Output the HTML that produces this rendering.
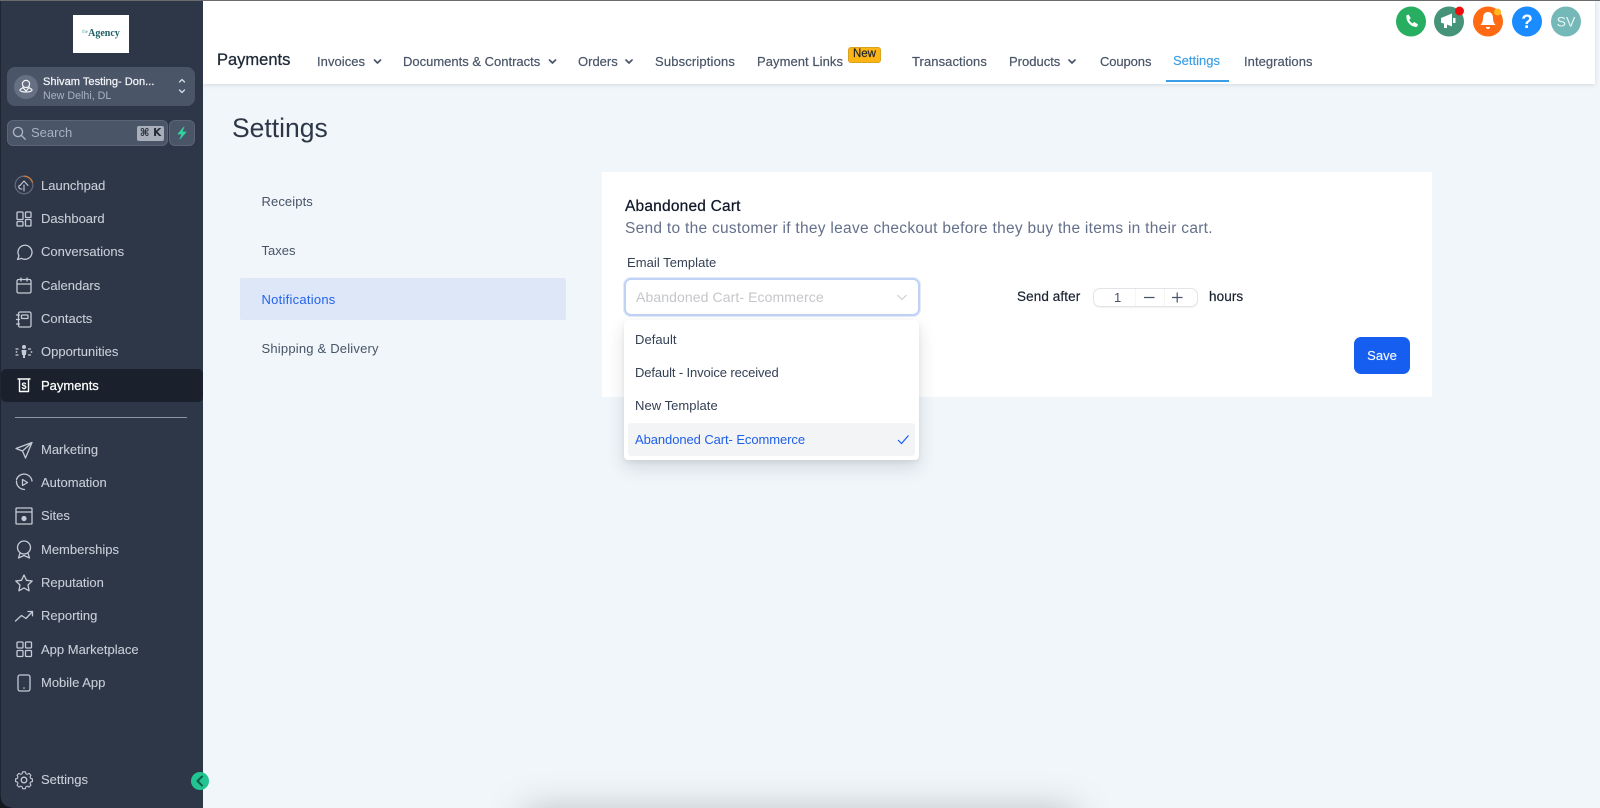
<!DOCTYPE html>
<html lang="en"><head><meta charset="utf-8"><title>Payments Settings</title>
<style>
*{box-sizing:border-box}
html,body{margin:0;padding:0;width:1600px;height:808px;overflow:hidden;background:#f1f6fa;font-family:"Liberation Sans",sans-serif}
#w{position:relative;width:1600px;height:808px;overflow:hidden;background:#f1f6fa}
.a{position:absolute}
.t{position:absolute;white-space:nowrap;line-height:20px;height:20px;font-size:13px}
.n{left:41px;color:#c9ced7;font-size:13px;-webkit-text-stroke:.1px #c9ced7}
.h{color:#4a5568;font-size:13px;-webkit-text-stroke:.2px #4a5568}
.m{left:261.500px;color:#475467;font-size:13px}
.o{left:635px;color:#344054;font-size:13px}
svg{position:absolute;left:0;top:0;overflow:visible}
</style></head><body><div id="w">
<div class="a" style="left:525px;top:812px;width:550px;height:30px;box-shadow:0 0 36px rgba(40,55,60,.34)"></div>
<div class="a" style="left:0;top:0;width:1600px;height:1px;background:#6b6b6b;z-index:9"></div>
<div class="a" style="left:203px;top:1px;width:1392px;height:83px;background:#fff;box-shadow:0 1px 4px rgba(50,70,90,.16)"></div>
<div class="a" style="left:0;top:0;width:202.500px;height:808px;background:#2d3748;border-left:1px solid #1f2633"></div>
<div class="a" style="left:0;top:796px;width:12px;height:12px;background:radial-gradient(circle at 100% 0,transparent 11px,#15181d 12px)"></div>

<div class="a" style="left:73px;top:15px;width:56px;height:38px;background:#fff"></div>
<div class="t" style="left:82px;top:23px;color:#1d5f66;font:bold 10px/20px 'Liberation Serif',serif"><span style="font-size:5px;font-weight:400;color:#65a5a5;vertical-align:3px">the</span>Agency</div>

<div class="a" style="left:7px;top:67px;width:188px;height:39px;background:#4a5568;border-radius:8px"></div>
<div class="a" style="left:14px;top:75px;width:24px;height:24px;background:#667082;border-radius:50%"></div>
<div class="t" style="left:43px;top:71.500px;color:#f2f4f7;font-size:11.100px;-webkit-text-stroke:.25px #f2f4f7">Shivam Testing- Don...</div>
<div class="t" style="left:43px;top:85.500px;color:#a9b2c0;font-size:10.700px">New Delhi, DL</div>
<div class="a" style="left:7px;top:120px;width:161px;height:26px;background:#4a5568;border:1px solid #5a6577;border-radius:6px"></div>
<div class="t" style="left:31px;top:123px;color:#a9b2c0;font-size:13px">Search</div>
<div class="a" style="left:137px;top:126px;width:27px;height:15px;background:#a8afbb;border-radius:2px;color:#222b38;font-size:10.500px;font-weight:700;line-height:15px;text-align:center;font-family:'DejaVu Sans',sans-serif">⌘ K</div>
<div class="a" style="left:169px;top:120px;width:26px;height:26px;background:#4a5568;border:1px solid #5a6577;border-radius:6px"></div>
<div class="a" style="left:1px;top:369px;width:201.500px;height:33px;background:#1a202c;border-radius:5px"></div>
<div class="a" style="left:15px;top:416.500px;width:172px;height:1px;background:#8d96a6"></div>

<div class="t n" style="top:175.500px">Launchpad</div>
<div class="t n" style="top:208.500px">Dashboard</div>
<div class="t n" style="top:242px">Conversations</div>
<div class="t n" style="top:275.500px">Calendars</div>
<div class="t n" style="top:308.500px">Contacts</div>
<div class="t n" style="top:342px">Opportunities</div>
<div class="t n" style="top:375.500px;color:#fff;-webkit-text-stroke:.25px #fff">Payments</div>
<div class="t n" style="top:439.500px">Marketing</div>
<div class="t n" style="top:472.500px">Automation</div>
<div class="t n" style="top:506px">Sites</div>
<div class="t n" style="top:539.500px">Memberships</div>
<div class="t n" style="top:572.500px">Reputation</div>
<div class="t n" style="top:606px">Reporting</div>
<div class="t n" style="top:639.500px">App Marketplace</div>
<div class="t n" style="top:672.500px">Mobile App</div>
<div class="t n" style="top:769.500px">Settings</div>

<svg width="1600" height="808" viewBox="0 0 1600 808" fill="none" stroke="#c5cbd5" stroke-width="1.300" stroke-linecap="round" stroke-linejoin="round">
<g stroke="#f1f3f6" stroke-width="1.200"><circle cx="26" cy="84" r="3.600"/><path d="M26 91l-3.500-3.800M26 91l3.500-3.800"/><path d="M22 88.500c-3 .6-3.500 3.500 4 3.500s7-2.900 4-3.500"/></g>
<path d="M179.500 82l2.500-2.500 2.500 2.500M179.500 90l2.500 2.500 2.500-2.500" stroke="#d7dbe2"/>
<circle cx="18" cy="132" r="4.600" stroke="#aeb6c3"/><path d="M21.500 135.500l3.800 3.800" stroke="#aeb6c3"/>
<path d="M184 127l-6 7h4l-2 5 6-7h-4z" fill="#2fd3a0" stroke="#2fd3a0" stroke-width=".8"/>
<circle cx="24" cy="185" r="8.800" stroke="#5e6878"/>
<path d="M24 176.200a8.800 8.800 0 0 1 8.400 6" stroke="#c9793f"/>
<path d="M24 191v-6M20 185.500l4-4.500 4 4.500M22 189c-3 .3-4-2-2.600-3.600" stroke="#c5cbd5" stroke-width="1.100"/>
<rect x="17" y="212" width="6" height="7.500" rx=".8"/><rect x="25.500" y="212" width="5.500" height="5.500" rx=".8"/><rect x="17" y="221.500" width="6" height="4.500" rx=".8"/><rect x="25.500" y="219.500" width="5.500" height="6.500" rx=".8"/>
<path d="M17.500 259.500l1.500-3.600a7 7 0 1 1 2.600 2.500z"/>
<rect x="17" y="279.500" width="14" height="13.500" rx="1.500"/><path d="M17 284h14M21 278v3M27 278v3"/>
<rect x="18.500" y="312" width="12.500" height="15" rx="1.500"/><rect x="21.500" y="315" width="6.500" height="3.500" rx=".8"/><path d="M16.500 315h3M16.500 319.500h3M16.500 324h3"/>
<circle cx="24" cy="347" r="2" fill="#c5cbd5" stroke="none"/><path d="M21.500 350h5l-.6 5h-.9v3h-2v-3h-.9z" fill="#c5cbd5" stroke="none"/>
<path d="M16 349h3.500M28.500 349h3.500M16 355h3.500M28.500 355h3.500" stroke-dasharray="2 1.500"/>
<circle cx="16.500" cy="352" r=".9" fill="#c5cbd5" stroke="none"/><circle cx="31.500" cy="352" r=".9" fill="#c5cbd5" stroke="none"/>
<path d="M18 379h12M19.500 379v12.500h9V379" stroke="#fff" stroke-width="1.400"/>
<text x="24" y="389" fill="#fff" stroke="none" font-family="Liberation Sans" font-size="9" font-weight="700" text-anchor="middle">$</text>
<path d="M32 442.500l-16 6 6.500 2.500 3 7zM32 442.500l-9.500 8.500"/>
<path d="M32 481a8 8 0 0 0-15.500-1.500M16.500 481a8 8 0 0 0 8 8.500"/><path d="M22.500 479.500l5 3-5 3z"/>
<rect x="16" y="508" width="16" height="16" rx=".6"/><path d="M16 512h16"/><circle cx="24" cy="518.500" r="2.600" fill="#c5cbd5" stroke="none"/>
<circle cx="24" cy="547.500" r="6.500"/><path d="M20 553l-1.500 5 5.500-2.500 5.500 2.500-1.500-5"/>
<path d="M24 575l2.500 5.300 5.700.7-4.200 4 1.100 5.800-5.100-2.900-5.100 2.900 1.100-5.800-4.200-4 5.700-.7z"/>
<path d="M15.500 621l6-5.500 4.500 3 6.500-7M28 611.500h4.500v4.300"/>
<rect x="17" y="642" width="6" height="6" rx="1"/><rect x="25.500" y="642" width="6" height="6" rx="1"/><rect x="17" y="650.500" width="6" height="6" rx="1"/><rect x="25.500" y="650.500" width="6" height="6" rx="1"/>
<rect x="18" y="675" width="12" height="16" rx="2"/><circle cx="24" cy="688" r=".8" fill="#c5cbd5" stroke="none"/>
<circle cx="24" cy="780" r="2.800"/><path d="M22.300 772h3.400l.6 2.300 1.800.8 2.100-1.200 2.300 2.400-1.200 2 .8 1.800 2.200.6v3.200l-2.200.6-.8 1.800 1.200 2-2.300 2.400-2.100-1.200-1.800.8-.6 2.300h-3.400l-.6-2.300-1.800-.8-2.100 1.200-2.300-2.400 1.200-2-.8-1.800-2.200-.6v-3.200l2.200-.6.8-1.800-1.200-2 2.300-2.400 2.100 1.200 1.800-.8z" transform="translate(24 780) scale(.82) translate(-24 -782)"/>
<circle cx="200" cy="781" r="9" fill="#22c58f" stroke="none"/>
<path d="M202 776.500l-4.500 4.500 4.500 4.500" stroke="#0d5c48" stroke-width="2"/>
<g stroke="#4a5568" stroke-width="1.700"><path d="M374.500 60l3 3 3-3M549.500 60l3 3 3-3M626 60l3 3 3-3M1069 60l3 3 3-3"/></g>
<g stroke="none">
<circle cx="1411" cy="21.500" r="15" fill="#27ae60"/><circle cx="1449" cy="21.500" r="15" fill="#459378"/><circle cx="1488" cy="21.500" r="15" fill="#ff6a13"/><circle cx="1527" cy="21.500" r="15" fill="#1a8cff"/><circle cx="1566" cy="21.500" r="15" fill="#75b8b8"/>
<path d="M1406 15.500l2.500-1 2.300 3.800-1.600 1.400c.7 1.500 1.800 2.800 3.500 3.700l1.500-1.500 3.800 2.500-1 2.500c-5.700 .5-11.500-5.400-10.500-11.400z" fill="#fff"/>
<path d="M1441 18l11-4.500v13l-5-2v3.500h-3v-4.500l-3-.8z" fill="#fff"/><rect x="1453" y="18" width="2.500" height="5" fill="#fff"/>
<path d="M1488 12c3.600 0 5 3 5 6 0 3.500 1 5 2.500 7h-15c1.500-2 2.500-3.500 2.500-7 0-3 1.400-6 5-6z" fill="#fff"/><path d="M1486 27h4a2 2 0 0 1-4 0z" fill="#fff"/>
<circle cx="1459.500" cy="11" r="4.500" fill="#f20d0d"/><circle cx="1497.500" cy="12" r="3.500" fill="#ffb81f"/>
</g>
<text x="1527" y="28" fill="#fff" stroke="none" font-family="Liberation Sans" font-size="19" font-weight="700" text-anchor="middle">?</text>
<text x="1566" y="26.500" fill="#e9f4f4" stroke="none" font-family="Liberation Sans" font-size="14" text-anchor="middle">SV</text>
</svg>

<div class="t" style="left:217px;top:49.500px;color:#1f2937;font-size:16.500px;-webkit-text-stroke:.3px #1f2937">Payments</div>
<div class="t h" style="left:317px;top:51.500px;letter-spacing:.05px">Invoices</div>
<div class="t h" style="left:403px;top:51.500px">Documents &amp; Contracts</div>
<div class="t h" style="left:578px;top:51.500px">Orders</div>
<div class="t h" style="left:655px;top:51.500px;letter-spacing:.15px">Subscriptions</div>
<div class="t h" style="left:757px;top:51.500px;letter-spacing:.06px">Payment Links</div>
<div class="a" style="left:848px;top:47px;width:33px;height:15.500px;background:#fdb515;border:1px solid #d9a21f;border-radius:3px;color:#1b2430;font-size:11.500px;line-height:13.500px;text-align:center;-webkit-text-stroke:.2px #1b2430">New</div>
<div class="t h" style="left:912px;top:51.500px;letter-spacing:.08px">Transactions</div>
<div class="t h" style="left:1009px;top:51.500px">Products</div>
<div class="t h" style="left:1100px;top:51.500px;letter-spacing:-.1px">Coupons</div>
<div class="t h" style="left:1173px;top:50.500px;color:#3a9ee6;-webkit-text-stroke:.15px #3a9ee6">Settings</div>
<div class="a" style="left:1166px;top:80px;width:63px;height:1.800px;background:#3a9ee6"></div>
<div class="t h" style="left:1244px;top:51.500px;letter-spacing:.05px">Integrations</div>

<div class="t" style="left:232px;top:113px;height:30px;line-height:30px;color:#2d3748;font-size:26.500px">Settings</div>

<div class="t m" style="top:191.500px;letter-spacing:.1px">Receipts</div>
<div class="t m" style="top:240.500px">Taxes</div>
<div class="a" style="left:239.500px;top:278px;width:326px;height:42px;background:#dde7f8;border-radius:2px"></div>
<div class="t m" style="top:289.500px;color:#2563eb;letter-spacing:.25px">Notifications</div>
<div class="t m" style="top:338.500px;letter-spacing:.2px">Shipping &amp; Delivery</div>

<div class="a" style="left:602px;top:172px;width:830px;height:225px;background:#fff"></div>
<div class="t" style="left:625px;top:196.500px;color:#101828;font-size:15.500px;letter-spacing:.2px;-webkit-text-stroke:.25px #101828">Abandoned Cart</div>
<div class="t" style="left:625px;top:218.500px;color:#64708a;font-size:15.500px;letter-spacing:.28px">Send to the customer if they leave checkout before they buy the items in their cart.</div>
<div class="t" style="left:627px;top:252.500px;color:#344054;font-size:13px;letter-spacing:.05px">Email Template</div>
<div class="a" style="left:624px;top:277.500px;width:296px;height:38px;background:#fff;border:2px solid #c0d2f6;border-radius:7px;box-shadow:0 0 0 1px #e3ebfb"></div>
<div class="t" style="left:636px;top:287px;color:#c4c6ca;font-size:14px;letter-spacing:.1px">Abandoned Cart- Ecommerce</div>
<svg width="1600" height="808" fill="none"><path d="M897.500 295l4.500 4.500 4.500-4.500" stroke="#c8ccd2" stroke-width="1.100"/></svg>

<div class="t" style="left:1017px;top:287px;color:#1a2230;font-size:13.500px;-webkit-text-stroke:.2px #1a2230;letter-spacing:.1px">Send after</div>
<div class="a" style="left:1093px;top:288px;width:105px;height:19px;border:1px solid #e1e4e8;border-radius:7px;box-shadow:0 1px 1px rgba(0,0,0,.05)"></div>
<div class="a" style="left:1135px;top:289px;width:1px;height:17px;background:#f5f5f6"></div>
<div class="a" style="left:1164px;top:289px;width:1px;height:17px;background:#f5f5f6"></div>
<div class="t" style="left:1114px;top:287.500px;color:#4a5363;font-size:13px">1</div>
<svg width="1600" height="808" fill="none"><path d="M1144 297.500h10.500M1172 297.500h10.500M1177.200 292.500v10" stroke="#475467" stroke-width="1.200"/></svg>
<div class="t" style="left:1209px;top:287px;color:#1a2230;font-size:13.500px;-webkit-text-stroke:.2px #1a2230;letter-spacing:.1px">hours</div>
<div class="a" style="left:1354px;top:337px;width:56px;height:37px;background:#155eef;border-radius:7px;color:#f2f6ff;font-size:13px;line-height:37px;text-align:center;-webkit-text-stroke:.15px #f2f6ff">Save</div>

<div class="a" style="left:624px;top:320px;width:295px;height:140px;background:#fff;border-radius:4px;box-shadow:0 8px 18px rgba(30,45,60,.14),0 2px 5px rgba(30,45,60,.07)"></div>
<div class="a" style="left:628px;top:423px;width:287px;height:33px;background:#f3f4f6;border-radius:3px"></div>
<div class="t o" style="top:329.500px;letter-spacing:.05px">Default</div>
<div class="t o" style="top:362.500px;letter-spacing:-.12px">Default - Invoice received</div>
<div class="t o" style="top:396px;letter-spacing:.05px">New Template</div>
<div class="t o" style="top:429.500px;color:#1f5fe8;letter-spacing:-.08px">Abandoned Cart- Ecommerce</div>
<svg width="1600" height="808" fill="none"><path d="M898 440l3.500 3.500 7-8" stroke="#155eef" stroke-width="1.200"/></svg>
</div></body></html>
